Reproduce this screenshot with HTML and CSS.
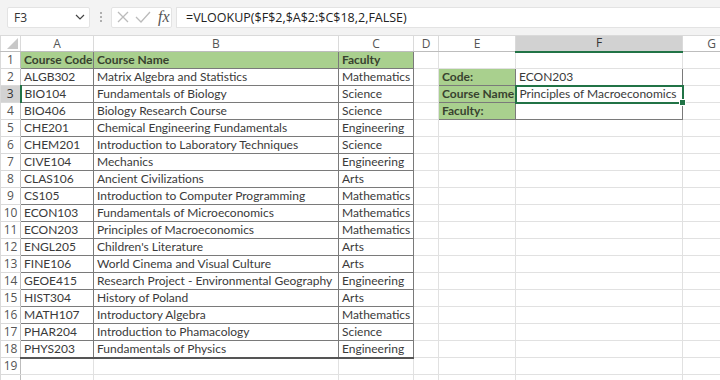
FILE: index.html
```html
<!DOCTYPE html>
<html lang="en">
<head>
    <meta charset="UTF-8">
    <title>Course lookup</title>
    <link rel="stylesheet" href="styles.css">
</head>
<body>
    <div class="formula-bar">
        <div class="name-box">
            <span>F3</span>
            <svg width="10" height="6" viewBox="0 0 10 6"><path d="M1 1l4 4 4-4" fill="none" stroke="#444" stroke-width="1.2"/></svg>
        </div>
        <div class="grip"><i></i><i></i><i></i></div>
        <div class="fx-buttons">
            <svg width="14" height="14" viewBox="0 0 14 14"><path d="M2 2l10 10M12 2L2 12" stroke="#bbb" stroke-width="1.3"/></svg>
            <svg width="16" height="14" viewBox="0 0 16 14"><path d="M1 7l5 5L15 2" fill="none" stroke="#bbb" stroke-width="1.3"/></svg>
            <span class="fx">fx</span>
        </div>
        <div class="formula">=VLOOKUP($F$2,$A$2:$C$18,2,FALSE)</div>
    </div>

    <table class="sheet">
        <colgroup>
            <col class="w-rh"><col class="w-a"><col class="w-b"><col class="w-c">
            <col class="w-d"><col class="w-e"><col class="w-f"><col class="w-g">
        </colgroup>
        <thead>
            <tr>
                <th class="corner"><span class="tri"></span></th>
                <th>A</th><th>B</th><th>C</th><th>D</th><th>E</th><th class="sel">F</th><th>G</th>
            </tr>
        </thead>
        <tbody id="rows"></tbody>
    </table>

    <script>
        const courses = [
            ['ALGB302', 'Matrix Algebra and Statistics', 'Mathematics'],
            ['BIO104', 'Fundamentals of Biology', 'Science'],
            ['BIO406', 'Biology Research Course', 'Science'],
            ['CHE201', 'Chemical Engineering Fundamentals', 'Engineering'],
            ['CHEM201', 'Introduction to Laboratory Techniques', 'Science'],
            ['CIVE104', 'Mechanics', 'Engineering'],
            ['CLAS106', 'Ancient Civilizations', 'Arts'],
            ['CS105', 'Introduction to Computer Programming', 'Mathematics'],
            ['ECON103', 'Fundamentals of Microeconomics', 'Mathematics'],
            ['ECON203', 'Principles of Macroeconomics', 'Mathematics'],
            ['ENGL205', "Children's Literature", 'Arts'],
            ['FINE106', 'World Cinema and Visual Culture', 'Arts'],
            ['GEOE415', 'Research Project - Environmental Geography', 'Engineering'],
            ['HIST304', 'History of Poland', 'Arts'],
            ['MATH107', 'Introductory Algebra', 'Mathematics'],
            ['PHAR204', 'Introduction to Phamacology', 'Science'],
            ['PHYS203', 'Fundamentals of Physics', 'Engineering']
        ];

        // lookup panel in E2:F4
        const lookup = {
            2: ['Code:', 'ECON203'],
            3: ['Course Name', 'Principles of Macroeconomics'],
            4: ['Faculty:', '']
        };

        function cell(text, cls) {
            const td = document.createElement('td');
            if (cls) td.className = cls;
            td.textContent = text || '';
            return td;
        }

        const body = document.getElementById('rows');
        for (let r = 1; r <= 20; r++) {
            const tr = document.createElement('tr');
            const rh = document.createElement('th');
            // row 20 only peeks in at the bottom edge
            rh.textContent = r < 20 ? r : '';
            if (r === 3) rh.className = 'sel';
            tr.appendChild(rh);

            if (r === 1) {
                tr.appendChild(cell('Course Code', 'tbl head'));
                tr.appendChild(cell('Course Name', 'tbl head'));
                tr.appendChild(cell('Faculty', 'tbl head'));
            } else if (r <= 18) {
                const c = courses[r - 2];
                const last = r === 18 ? ' last' : '';
                tr.appendChild(cell(c[0], 'tbl' + last));
                tr.appendChild(cell(c[1], 'tbl' + last));
                tr.appendChild(cell(c[2], 'tbl' + last));
            } else {
                tr.appendChild(cell());
                tr.appendChild(cell());
                tr.appendChild(cell());
            }

            tr.appendChild(cell());
            if (lookup[r]) {
                tr.appendChild(cell(lookup[r][0], 'box head'));
                const f = cell(lookup[r][1], 'box');
                if (r === 3) {
                    f.classList.add('active');
                    const h = document.createElement('span');
                    h.className = 'handle';
                    f.appendChild(h);
                }
                tr.appendChild(f);
            } else {
                tr.appendChild(cell());
                tr.appendChild(cell());
            }
            tr.appendChild(cell());
            body.appendChild(tr);
        }
    </script>
</body>
</html>
```

FILE: styles.css
```css
body {
    margin: 0;
    background: #fff;
    font-family: Lato, "Liberation Sans", sans-serif;
    color: #3a3a3a;
    overflow: hidden;
}

.formula-bar {
    display: flex;
    align-items: center;
    height: 35px;
    padding: 0 0 1px 7px;
    background: #f3f3f3;
    box-sizing: border-box;
    font-family: "Open Sans", "Liberation Sans", sans-serif;
}
.name-box {
    width: 83px;
    height: 21px;
    box-sizing: border-box;
    background: #fff;
    border: 1px solid #e3e3e3;
    border-radius: 2px;
    display: flex;
    align-items: center;
    justify-content: space-between;
    padding: 0 4px 0 6px;
    font-size: 12px;
    color: #333;
}
.grip {
    width: 21px;
    display: flex;
    flex-direction: column;
    align-items: center;
    gap: 2px;
}
.grip i {
    width: 2px;
    height: 2px;
    background: #999;
    border-radius: 50%;
}
.fx-buttons {
    width: 61px;
    height: 21px;
    box-sizing: border-box;
    background: #fff;
    border: 1px solid #e3e3e3;
    border-radius: 2px;
    display: flex;
    align-items: center;
    gap: 5px;
    padding-left: 4px;
}
.fx {
    font-family: "Liberation Serif", serif;
    font-style: italic;
    font-size: 16px;
    color: #555;
    margin-left: 2px;
}
.formula {
    flex: 1;
    height: 21px;
    margin-left: 4px;
    box-sizing: border-box;
    background: #fff;
    border: 1px solid #e3e3e3;
    border-right: none;
    padding-left: 9px;
    font-size: 12.5px;
    line-height: 19px;
    color: #222;
}

.sheet {
    border-collapse: collapse;
    table-layout: fixed;
    width: 740px;
    font-size: 12px;
}
.sheet tr {
    height: 17px;
}
.w-rh { width: 20px; }
.w-a { width: 73px; }
.w-b { width: 245px; }
.w-c { width: 75px; }
.w-d { width: 25px; }
.w-e { width: 77px; }
.w-f { width: 167px; }
.w-g { width: 58px; }

.sheet th {
    padding: 0;
    line-height: 14px;
    font-weight: normal;
    font-size: 12px;
    color: #555;
    background: #fff;
    border: 1px solid #dadada;
    font-family: "Open Sans", "Liberation Sans", sans-serif;
    text-align: center;
}
.sheet thead tr {
    height: 16px;
}
.sheet thead th {
    border-bottom-color: #bdbdbd;
}
.sheet tbody th {
    border-right-color: #bdbdbd;
}
.sheet th.sel {
    background: #d2d2d2;
    color: #333;
}
.sheet thead th.sel {
    border-bottom: 2px solid #217346;
}
.sheet tbody th.sel {
    border-right: 2px solid #217346;
}
.corner {
    position: relative;
}
.tri {
    position: absolute;
    right: 2px;
    bottom: 2px;
    width: 0;
    height: 0;
    border-left: 11px solid transparent;
    border-bottom: 11px solid #c8c8c8;
}

.sheet td {
    padding: 0 3px;
    line-height: 14px;
    border: 1px solid #e1e1e1;
    white-space: nowrap;
    overflow: hidden;
}
.sheet td.tbl,
.sheet td.box {
    border: 1px solid #7a7a7a;
}
.sheet td.last {
    border-bottom: 2px solid #555;
}
.sheet td.head {
    background: #a9d08e;
    font-weight: bold;
    color: #38422f;
}
.sheet td.active {
    position: relative;
    border: 2px solid #217346;
    overflow: visible;
}
.handle {
    position: absolute;
    right: -4px;
    bottom: -4px;
    width: 5px;
    height: 5px;
    background: #217346;
    border: 1px solid #fff;
}
```
